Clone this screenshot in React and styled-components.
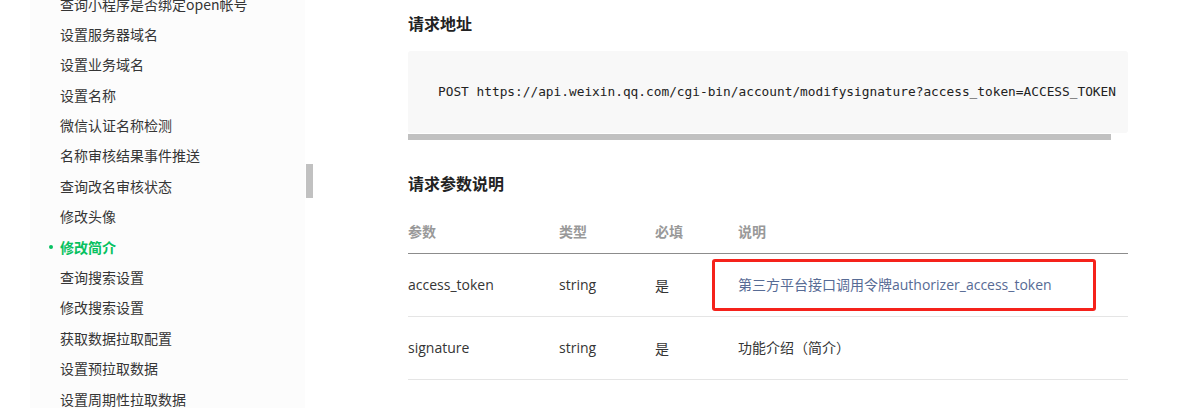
import React from "react";
import styled, { createGlobalStyle } from "styled-components";

const GlobalStyle = createGlobalStyle`
  html, body {
    margin: 0;
    padding: 0;
    background: #fff;
  }
  body {
    font-family: "Open Sans", "Noto Sans CJK SC", sans-serif;
    color: #353535;
    overflow: hidden;
  }
`;

const Page = styled.div`
  display: flex;
  height: 408px;
  overflow: hidden;
  padding-left: 30px;
`;

const Sidebar = styled.aside`
  position: relative;
  width: 275px;
  height: 408px;
  background: #fcfcfc;
  overflow: hidden;
  flex-shrink: 0;
`;

const ScrollTrack = styled.div`
  width: 7px;
  margin-left: 1px;
  flex-shrink: 0;
  padding-top: 164px;
`;

const ScrollThumb = styled.div`
  width: ${({ $w }) => $w || "100%"};
  height: ${({ $h }) => $h || "100%"};
  background: #c1c1c1;
`;

const NavList = styled.ul`
  list-style: none;
  margin: -11.5px 0 0;
  padding: 0 0 0 30px;
`;

const NavItem = styled.li`
  position: relative;
  height: 30.4px;
  line-height: 30.4px;
  font-size: 14px;
  font-family: "Noto Sans CJK SC", sans-serif;
  white-space: nowrap;
  color: ${({ $active }) => ($active ? "#07c160" : "#353535")};
  font-weight: ${({ $active }) => ($active ? 700 : 400)};

  &::before {
    content: "";
    display: ${({ $active }) => ($active ? "block" : "none")};
    position: absolute;
    left: -11px;
    top: 13px;
    width: 4px;
    height: 4px;
    border-radius: 50%;
    background: #07c160;
  }
`;

const Main = styled.main`
  width: 720px;
  margin-left: 95px;
  flex-shrink: 0;
`;

const Heading = styled.h3`
  margin: ${({ $top }) => $top} 0 0;
  font-size: 16px;
  line-height: 24px;
  font-weight: 700;
  color: #222;
  font-family: "Noto Sans CJK SC", sans-serif;
`;

const CodeBlock = styled.div`
  margin-top: 16px;
`;

const Pre = styled.pre`
  margin: 0;
  height: 82px;
  box-sizing: border-box;
  padding: 31px 0 0 30px;
  background: #f8f8f8;
  border-radius: 3px;
  font-family: "DejaVu Sans Mono", "Liberation Mono", monospace;
  font-size: 12.8px;
  line-height: 20px;
  color: #222;
  white-space: pre;
  overflow: hidden;
`;

const CodeScroll = styled.div`
  padding-top: 1px;
  height: 6px;
`;

const Table = styled.table`
  width: 100%;
  margin-top: 14px;
  border-collapse: collapse;
  font-size: 14px;
`;

const Th = styled.th`
  width: ${({ $w }) => $w || "auto"};
  text-align: left;
  padding: 11px 0;
  line-height: 22px;
  font-weight: 600;
  color: #999;
  font-family: "Noto Sans CJK SC", sans-serif;
  border-bottom: 1px solid #8c8c8c;
`;

const Td = styled.td`
  position: relative;
  height: 62px;
  padding: 0;
  line-height: 22px;
  vertical-align: middle;
  border-bottom: 1px solid #e5e5e5;
  color: ${({ $link }) => ($link ? "#576b95" : "#353535")};
  font-family: ${({ $cjk }) =>
    $cjk ? `"Noto Sans CJK SC", sans-serif` : `"Open Sans", "Noto Sans CJK SC", sans-serif`};
`;

const Highlight = styled.div`
  position: absolute;
  left: -26px;
  top: 5px;
  width: 384px;
  height: 52px;
  box-sizing: border-box;
  border: 3px solid #f5221b;
  border-radius: 3px;
  pointer-events: none;
`;

const navItems = [
  "查询小程序是否绑定open帐号",
  "设置服务器域名",
  "设置业务域名",
  "设置名称",
  "微信认证名称检测",
  "名称审核结果事件推送",
  "查询改名审核状态",
  "修改头像",
  "修改简介",
  "查询搜索设置",
  "修改搜索设置",
  "获取数据拉取配置",
  "设置预拉取数据",
  "设置周期性拉取数据",
];

const params = [
  {
    name: "access_token",
    type: "string",
    required: "是",
    desc: "第三方平台接口调用令牌authorizer_access_token",
    marked: true,
  },
  { name: "signature", type: "string", required: "是", desc: "功能介绍（简介）" },
];

export default function App() {
  return (
    <>
      <GlobalStyle />
      <Page>
        <Sidebar>
          <NavList>
            {navItems.map((item) => (
              <NavItem key={item} $active={item === "修改简介"}>
                {item}
              </NavItem>
            ))}
          </NavList>
        </Sidebar>
        <ScrollTrack>
          <ScrollThumb $h="34px" />
        </ScrollTrack>
        <Main>
          <Heading $top="11px">请求地址</Heading>
          <CodeBlock>
            <Pre>
              POST https://api.weixin.qq.com/cgi-bin/account/modifysignature?access_token=ACCESS_TOKEN
            </Pre>
            <CodeScroll>
              <ScrollThumb $w="703px" />
            </CodeScroll>
          </CodeBlock>
          <Heading $top="31px">请求参数说明</Heading>
          <Table>
            <thead>
              <tr>
                <Th $w="151px">参数</Th>
                <Th $w="96px">类型</Th>
                <Th $w="83px">必填</Th>
                <Th>说明</Th>
              </tr>
            </thead>
            <tbody>
              {params.map((p) => (
                <tr key={p.name}>
                  <Td>{p.name}</Td>
                  <Td>{p.type}</Td>
                  <Td $cjk>{p.required}</Td>
                  <Td $link={p.marked}>
                    {p.desc}
                    {p.marked && <Highlight />}
                  </Td>
                </tr>
              ))}
            </tbody>
          </Table>
        </Main>
      </Page>
    </>
  );
}
